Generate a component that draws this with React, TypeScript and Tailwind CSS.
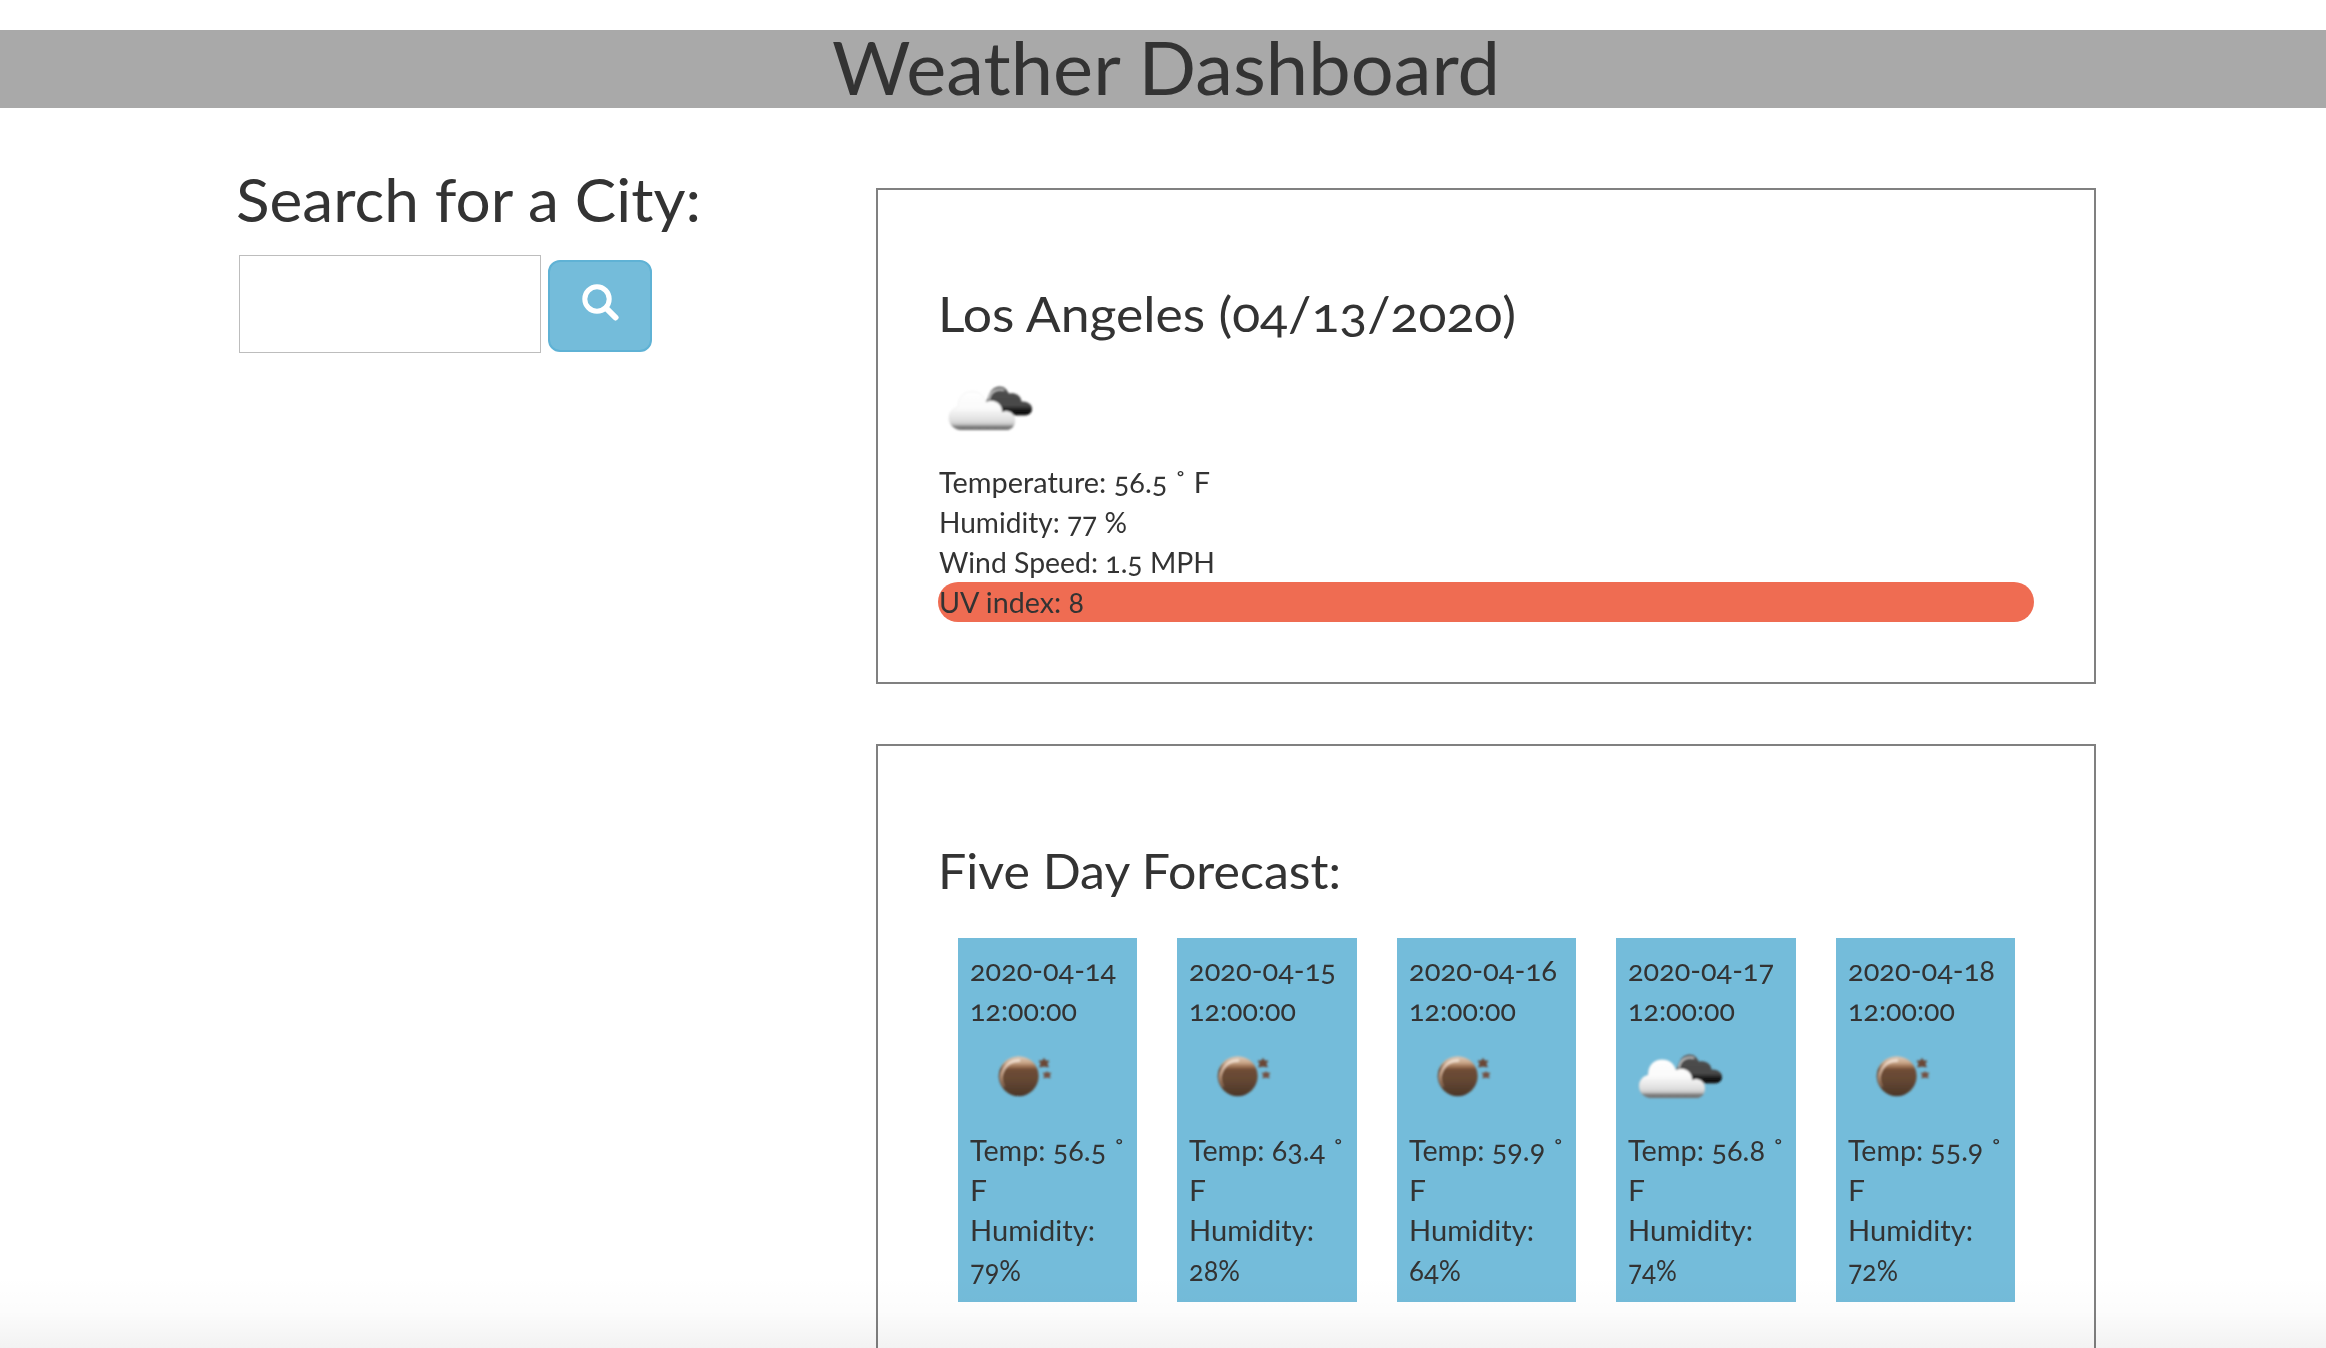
import React, { useLayoutEffect, useRef } from "react";

type FitProps = { w: number; children: React.ReactNode };

// Stretches a single line of text horizontally so that it fills a given width.
function Fit({ w, children }: FitProps) {
  const ref = useRef<HTMLSpanElement>(null);
  useLayoutEffect(() => {
    const el = ref.current;
    if (!el) return;
    el.style.transform = "none";
    const natural = el.getBoundingClientRect().width;
    el.style.transform = `scaleX(${w / natural})`;
  }, [w]);
  return (
    <span className="block whitespace-nowrap" style={{ width: w }}>
      <span ref={ref} className="inline-block origin-left align-top">
        {children}
      </span>
    </span>
  );
}

function Clouds({ id }: { id: string }) {
  return (
    <svg className="block" width="100" height="100" viewBox="0 0 100 100">
      <defs>
        <linearGradient id={id + "w"} x1="0" y1="29" x2="0" y2="68" gradientUnits="userSpaceOnUse">
          <stop offset="0" stopColor="#ffffff" />
          <stop offset=".45" stopColor="#fafafa" />
          <stop offset=".78" stopColor="#dcdcdc" />
          <stop offset=".86" stopColor="#c0c0c0" />
          <stop offset=".91" stopColor="#808080" />
          <stop offset="1" stopColor="#707070" />
        </linearGradient>
        <linearGradient id={id + "d"} x1="0" y1="24" x2="0" y2="54" gradientUnits="userSpaceOnUse">
          <stop offset="0" stopColor="#686868" />
          <stop offset=".25" stopColor="#4c4c4c" />
          <stop offset=".65" stopColor="#484848" />
          <stop offset=".85" stopColor="#0c0c0c" />
          <stop offset="1" stopColor="#222222" />
        </linearGradient>
        <filter id={id + "s"} x="-10%" y="-10%" width="120%" height="120%">
          <feGaussianBlur stdDeviation="0.8" />
        </filter>
      </defs>
      <g filter={`url(#${id}s)`}>
        <path
          d="M47 40C50 38 50 34 52 31C54 27 57 24.500 62 24.500C67 24.500 69 28 71 31.500C78 30 83 34 83.500 39.500C89 39 94 42 94 46.500C94 51 91 53.500 86 53.500H66Z"
          fill={`url(#${id}d)`}
        />
        <path d="M51 38C52 30 58 26 66 28" fill="none" stroke="#c8c8c8" strokeWidth="1.600" />
        <path
          d="M22 68C15 67 11 62 11 56C11 50 15 46 20 45C20 35 26 29.500 34 29.500C42 29.500 46 34 48 40C57 36 65 43 64 50C71 47 77 52 77 58C77 64 74 67 70 68Z"
          fill={`url(#${id}w)`}
          stroke="#9a9a9a"
          strokeOpacity=".15"
          strokeWidth=".8"
        />
      </g>
    </svg>
  );
}

function Moon({ id }: { id: string }) {
  return (
    <svg className="block" width="100" height="100" viewBox="0 0 100 100">
      <defs>
        <linearGradient id={id + "m"} x1="0" y1="26" x2="0" y2="66" gradientUnits="userSpaceOnUse">
          <stop offset="0" stopColor="#dccabb" />
          <stop offset=".16" stopColor="#cba98c" />
          <stop offset=".26" stopColor="#9d7253" />
          <stop offset=".34" stopColor="#6f4c35" />
          <stop offset=".6" stopColor="#654733" />
          <stop offset="1" stopColor="#4b3628" />
        </linearGradient>
        <linearGradient id={id + "h"} x1="0" y1="29" x2="0" y2="60" gradientUnits="userSpaceOnUse">
          <stop offset="0" stopColor="#f6e9de" stopOpacity=".95" />
          <stop offset=".5" stopColor="#dcb89c" stopOpacity=".8" />
          <stop offset="1" stopColor="#a67c5e" stopOpacity=".3" />
        </linearGradient>
        <filter id={id + "s"} x="-10%" y="-10%" width="120%" height="120%">
          <feGaussianBlur stdDeviation="0.9" />
        </filter>
      </defs>
      <g filter={`url(#${id}s)`}>
        <circle cx="48.700" cy="46.200" r="20" fill={`url(#${id}m)`} />
        <path d="M34 57A17.500 17.500 0 0 1 50 30.500" fill="none" stroke={`url(#${id}h)`} strokeWidth="2.600" />
        <path
          d="M74 28.500L75.500 31H79L77 33.500L78.300 37L74 36L69.700 37L71 33.500L69 31H72.500Z"
          fill="#6a4636"
          stroke="#6a4636"
        />
        <path
          d="M77 41.500L78.200 43H81L79.500 45.500L80.300 48L77 47.300L73.700 48L74.500 45.500L73 43H75.800Z"
          fill="#755040"
          stroke="#755040"
          strokeWidth=".6"
        />
      </g>
    </svg>
  );
}

const days = [
  { date: "2020-04-14", temp: "56.5", hum: "79%", cloud: false, dw: 146, tw: 155, hw: 51 },
  { date: "2020-04-15", temp: "63.4", hum: "28%", cloud: false, dw: 147, tw: 155, hw: 51 },
  { date: "2020-04-16", temp: "59.9", hum: "64%", cloud: false, dw: 148, tw: 155, hw: 52 },
  { date: "2020-04-17", temp: "56.8", hum: "74%", cloud: true, dw: 146, tw: 156, hw: 49 },
  { date: "2020-04-18", temp: "55.9", hum: "72%", cloud: false, dw: 147, tw: 154, hw: 50 },
];

export default function App() {
  return (
    <div className="relative h-[1348px] w-full overflow-hidden bg-white pt-[30px] font-['Lato',sans-serif] text-[28px] leading-[40px] text-[#333] oldstyle-nums">
      <header className="flex h-[78px] justify-center bg-[#a9a9a9] pl-[6px] text-[73px] leading-[75px]">
        <Fit w={668}>Weather Dashboard</Fit>
      </header>

      <div className="flex">
        <section className="w-[876px] shrink-0 pt-[58px] pl-[236px]">
          <h2 className="text-[60px] leading-[66px]">
            <Fit w={465}>Search for a City:</Fit>
          </h2>
          <div className="mt-[23px] flex pl-[3px]">
            <input className="h-[98px] w-[302px] border border-[#bdbdbd] bg-white outline-none" />
            <button className="mt-[5px] ml-[7px] flex h-[92px] w-[104px] justify-center rounded-[12px] border-2 border-[#5fb2d5] bg-[#74bcda] pt-[22px]">
              <svg width="37" height="37" viewBox="0 0 37 37" fill="none" stroke="#fff">
                <circle cx="15" cy="15" r="12.200" strokeWidth="5" />
                <path d="M24.500 24.500L33.500 33.500" strokeWidth="6" strokeLinecap="round" />
              </svg>
            </button>
          </div>
        </section>

        <main className="mt-20 flex w-[1220px] shrink-0 flex-col gap-[60px]">
          <section className="h-[496px] border-2 border-[#808080] px-[60px] pt-[97px]">
            <h3 className="text-[48px] leading-[53px]">
              <Fit w={578}>Los Angeles (04/13/2020)</Fit>
            </h3>
            <div className="mt-[22px]">
              <Clouds id="now" />
            </div>
            <div className="pl-px">
              <Fit w={271}>Temperature: 56.5 ˚ F</Fit>
              <Fit w={188}>Humidity: 77 %</Fit>
              <Fit w={276}>Wind Speed: 1.5 MPH</Fit>
            </div>
            <div className="rounded-full bg-[#ef6c52] pl-px">
              <Fit w={145}>UV index: 8</Fit>
            </div>
          </section>

          <section className="h-[700px] border-2 border-[#808080] px-[60px] pt-[98px]">
            <h3 className="text-[48px] leading-[53px]">
              <Fit w={403}>Five Day Forecast:</Fit>
            </h3>
            <div className="mt-[41px] ml-5 flex gap-[40.300px]">
              {days.map((d) => (
                <div key={d.date} className="h-[364px] w-[179.200px] bg-[#74bcda] px-3 py-3">
                  <Fit w={d.dw}>{d.date}</Fit>
                  <Fit w={107}>12:00:00</Fit>
                  {d.cloud ? <Clouds id={d.date} /> : <Moon id={"m" + d.date} />}
                  <Fit w={d.tw}>Temp: {d.temp} ˚</Fit>
                  <Fit w={17}>F</Fit>
                  <Fit w={125}>Humidity:</Fit>
                  <Fit w={d.hw}>{d.hum}</Fit>
                </div>
              ))}
            </div>
          </section>
        </main>
      </div>

      <div className="pointer-events-none absolute inset-x-0 bottom-0 h-[72px] bg-linear-to-b from-black/0 via-black/[0.013] to-black/[0.05]" />
    </div>
  );
}
